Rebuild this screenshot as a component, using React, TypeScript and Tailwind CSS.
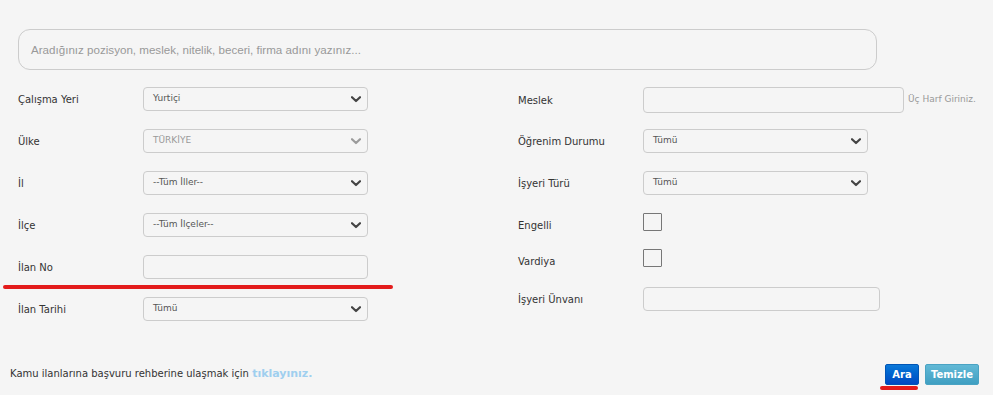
import React from 'react';

const Chevron = () => (
  <svg width="10" height="7" viewBox="0 0 10 7" className="shrink-0">
    <path d="M1 1.2 L5 5 L9 1.2" fill="none" stroke="#444" strokeWidth="2.2" strokeLinecap="round" strokeLinejoin="round" />
  </svg>
);

const Select = ({ value, disabled = false }: { value: string; disabled?: boolean }) => (
  <div className="w-[225px] h-[24px] flex items-center justify-between pl-[9px] pr-[6px] border border-[#cccccc] rounded-[4px] bg-[#f5f5f5]">
    <span className={disabled ? 'text-[9px] text-[#999999]' : 'text-[9px] text-[#555555]'}>{value}</span>
    <span className={disabled ? 'opacity-50' : ''}>
      <Chevron />
    </span>
  </div>
);

const TextBox = ({ w, h = 24 }: { w: string; h?: number }) => (
  <div className={`${w} ${h === 26 ? 'h-[26px]' : 'h-[24px]'} border border-[#cccccc] rounded-[4px] bg-[#f5f5f5]`} />
);

const Check = () => <div className="w-[19px] h-[18px] border-[1.5px] border-[#777777] rounded-[1px] bg-[#f5f5f5]" />;

const Row = ({ label, children, className = '', low = false }: { label: string; children: React.ReactNode; className?: string; low?: boolean }) => (
  <div className={`flex items-center ${className}`}>
    <div className={`w-[125px] shrink-0 text-[10px] text-[#333333] ${low ? 'translate-y-[3px]' : ''}`}>{label}</div>
    {children}
  </div>
);

export default function App() {
  return (
    <div className="relative w-[993px] h-[395px] overflow-hidden bg-[#f5f5f5] font-['DejaVu_Sans',Verdana,sans-serif]">
      <div className="pt-[29px] px-[18px]">
        <div className="w-[859px] h-[41px] border border-[#cccccc] rounded-[12px] flex items-center pl-[12px]">
          <span className="font-['Liberation_Sans',Arial,sans-serif] text-[11.6px] text-[#999999]">
            Aradığınız pozisyon, meslek, nitelik, beceri, firma adını yazınız...
          </span>
        </div>

        <div className="grid grid-cols-[500px_1fr] mt-[17px]">
          <div className="flex flex-col gap-[18px]">
            <Row label="Çalışma Yeri"><Select value="Yurtiçi" /></Row>
            <Row label="Ülke"><Select value="TÜRKİYE" disabled /></Row>
            <Row label="İl"><Select value="--Tüm İller--" /></Row>
            <Row label="İlçe"><Select value="--Tüm İlçeler--" /></Row>
            <Row label="İlan No"><TextBox w="w-[225px]" /></Row>
            <Row label="İlan Tarihi"><Select value="Tümü" /></Row>
          </div>

          <div className="flex flex-col">
            <Row label="Meslek">
              <TextBox w="w-[261px]" h={26} />
              <span className="ml-[4px] whitespace-nowrap text-[9px] text-[#999999]">Üç Harf Giriniz.</span>
            </Row>
            <Row label="Öğrenim Durumu" className="mt-[16px]"><Select value="Tümü" /></Row>
            <Row label="İşyeri Türü" className="mt-[18px]"><Select value="Tümü" /></Row>
            <Row label="Engelli" className="mt-[18px]" low><Check /></Row>
            <Row label="Vardiya" className="mt-[18px]" low><Check /></Row>
            <Row label="İşyeri Ünvanı" className="mt-[20px]"><TextBox w="w-[237px]" /></Row>
          </div>
        </div>
      </div>

      <div className="flex items-center justify-between pl-[10px] pr-[14px] mt-[43px]">
        <p className="text-[10px] text-[#333333]">
          Kamu ilanlarına başvuru rehberine ulaşmak için{' '}
          <a className="font-bold text-[11px] text-[#9fcfef] cursor-pointer">tıklayınız.</a>
        </p>
        <div className="flex gap-[6px]">
          <button className="w-[34px] h-[21px] rounded-[2px] border border-[#0055b5] bg-gradient-to-b from-[#0c78d8] to-[#0048c2] text-white text-[10px] font-bold">
            Ara
          </button>
          <button className="w-[54px] h-[21px] rounded-[2px] border border-[#4aa3c3] bg-gradient-to-b from-[#62b9d6] to-[#3f9fc2] text-white text-[10px] font-bold">
            Temizle
          </button>
        </div>
      </div>

      {/* red annotation marks */}
      <div className="absolute left-[3px] top-[285px] w-[390px] h-[4px] rounded-full bg-[#e31c1c]" />
      <div className="absolute left-[880px] top-[386px] w-[38px] h-[4px] rounded-full bg-[#e31c1c]" />
    </div>
  );
}
